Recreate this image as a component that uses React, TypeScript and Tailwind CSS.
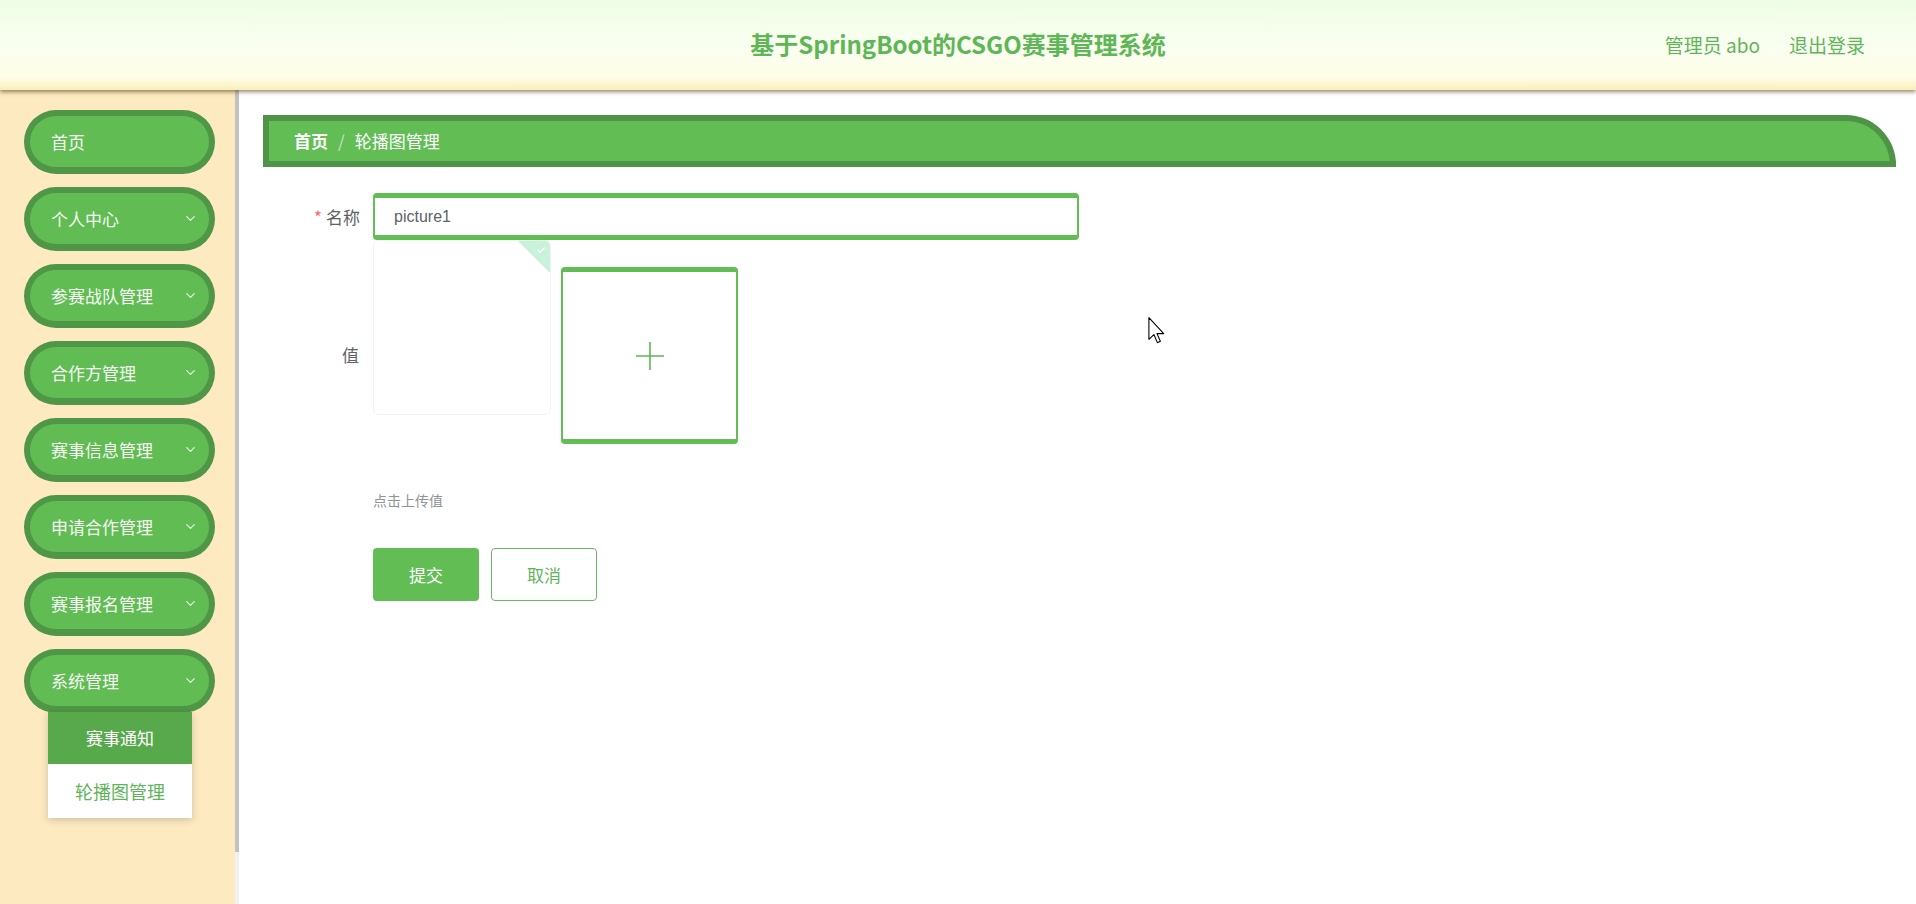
import React from "react";
import { ChevronDown } from "lucide-react";

const FONT = '"Microsoft YaHei", "Noto Sans CJK SC", "Noto Sans", sans-serif';

const menus = [
  { label: "首页", arrow: false },
  { label: "个人中心", arrow: true },
  { label: "参赛战队管理", arrow: true },
  { label: "合作方管理", arrow: true },
  { label: "赛事信息管理", arrow: true },
  { label: "申请合作管理", arrow: true },
  { label: "赛事报名管理", arrow: true },
  { label: "系统管理", arrow: true },
];

export default function App() {
  return (
    <div className="relative flex h-[904px] w-full flex-col overflow-hidden bg-white" style={{ fontFamily: FONT }}>
      {/* Header */}
      <header className="relative z-10 flex h-[90px] shrink-0 items-center bg-[linear-gradient(to_bottom,#eefde6_0%,#fafff0_55%,#fffde6_86%,#f9eebb_100%)] shadow-[0_2px_4px_rgba(80,60,20,0.6)]">
        <div className="flex-1" />
        <h1 className="absolute left-1/2 top-[29px] -translate-x-1/2 whitespace-nowrap text-[24px] font-bold leading-[30px] text-[#5fb656]">
          基于SpringBoot的CSGO赛事管理系统
        </h1>
        <div className="flex items-center gap-[29px] pr-[51px] text-[19px] leading-[26px] text-[#62b45a]">
          <span>管理员 abo</span>
          <span>退出登录</span>
        </div>
      </header>

      <div className="flex flex-1">
        {/* Sidebar */}
        <aside className="flex w-[235px] shrink-0 flex-col bg-[#fdeac1] pl-[24px] pt-[20px]">
          {menus.map((m, i) => (
            <div key={i} className="mb-[13px]">
              <div className="flex h-[64px] w-[191px] items-center justify-between rounded-full border-[6px] border-b-[7px] border-[#4f9747] bg-[#61bc54] pl-[21px] pr-[11px] text-[17px] text-[#f6fbf4]">
                <span>{m.label}</span>
                {m.arrow && <ChevronDown size={15} strokeWidth={1.8} className="text-[#eef8ec]" />}
              </div>
              {i === menus.length - 1 && (
                <div className="ml-[24px] mt-[-1px] w-[144px] shadow-[0_2px_8px_rgba(0,0,0,0.18)]">
                  <div className="flex h-[52px] items-center justify-center bg-[#58a94c] text-[17px] text-white">赛事通知</div>
                  <div className="flex h-[54px] items-center justify-center bg-white text-[18px] text-[#5fb45a]">轮播图管理</div>
                </div>
              )}
            </div>
          ))}
        </aside>
        <div className="flex w-[4px] shrink-0 flex-col">
          <div className="h-[762px] bg-[#c2c2c2]" />
          <div className="flex-1 bg-[#f1f1f1]" />
        </div>

        {/* Main */}
        <main className="flex-1 pl-[24px] pr-[20px] pt-[25px]">
          <div className="flex h-[52px] items-center rounded-tr-[50px] border-[6px] border-[#4f9346] bg-[#62bd55] pl-[25px] text-[17px] text-white">
            <span className="font-bold">首页</span>
            <span className="mx-[10px] text-[#c6e3bf]">/</span>
            <span>轮播图管理</span>
          </div>

          <div className="mt-[26px]">
            {/* 名称 */}
            <div className="flex items-center">
              <label className="w-[110px] pr-[13px] text-right text-[17px] text-[#606266]">
                <span className="mr-[4px] text-[#f56c6c]">*</span>名称
              </label>
              <div className="flex h-[47px] w-[706px] items-center rounded-[4px] border-x-[2px] border-y-[5px] border-[#62bd55] bg-white pl-[19px] text-[16px] text-[#606266]" style={{ fontFamily: '"Liberation Sans", Arial, sans-serif' }}>
                picture1
              </div>
            </div>

            {/* 值 */}
            <div className="flex items-start">
              <label className="mt-[103px] w-[110px] pr-[14px] text-right text-[17px] leading-[24px] text-[#606266]">值</label>
              <div className="relative h-[175px] w-[178px] overflow-hidden rounded-[6px] border border-[#f2f3f5] bg-white">
                <div className="absolute right-0 top-0 h-0 w-0 border-l-[32px] border-t-[32px] border-l-transparent border-t-[#c9f2dc]" />
                <svg className="absolute right-[4px] top-[4px]" width="10" height="10" viewBox="0 0 10 10">
                  <path d="M1.5 5 L4 7.5 L8.5 2.5" stroke="#ffffff" strokeWidth="1.3" fill="none" />
                </svg>
              </div>
              <div className="ml-[10px] mt-[27px] flex h-[177px] w-[177px] items-center justify-center rounded-[4px] border-x-[2px] border-y-[5px] border-[#62bd55] bg-white">
                <svg width="28" height="28" viewBox="0 0 28 28">
                  <path d="M14 0 V28 M0 14 H28" stroke="#5fb658" strokeWidth="1.6" />
                </svg>
              </div>
            </div>

            <div className="ml-[110px] mt-[46px] text-[14px] leading-[20px] text-[#909399]">点击上传值</div>

            <div className="ml-[110px] mt-[38px] flex gap-[12px]">
              <button className="h-[53px] w-[106px] rounded-[4px] bg-[#62bd55] text-[17px] text-white">提交</button>
              <button className="h-[53px] w-[106px] rounded-[4px] border border-[#6ab862] bg-white text-[17px] text-[#62b45a]">取消</button>
            </div>
          </div>
        </main>
      </div>

      {/* mouse cursor */}
      <svg className="absolute left-[1148px] top-[317px]" width="18" height="27" viewBox="0 0 13 20">
        <path d="M0.5 0.5 L0.5 16.5 L4.2 13 L6.8 19 L9 18 L6.5 12.3 L11.5 12.3 Z" fill="#ffffff" stroke="#000000" strokeWidth="0.8" strokeLinejoin="round" />
      </svg>
    </div>
  );
}
